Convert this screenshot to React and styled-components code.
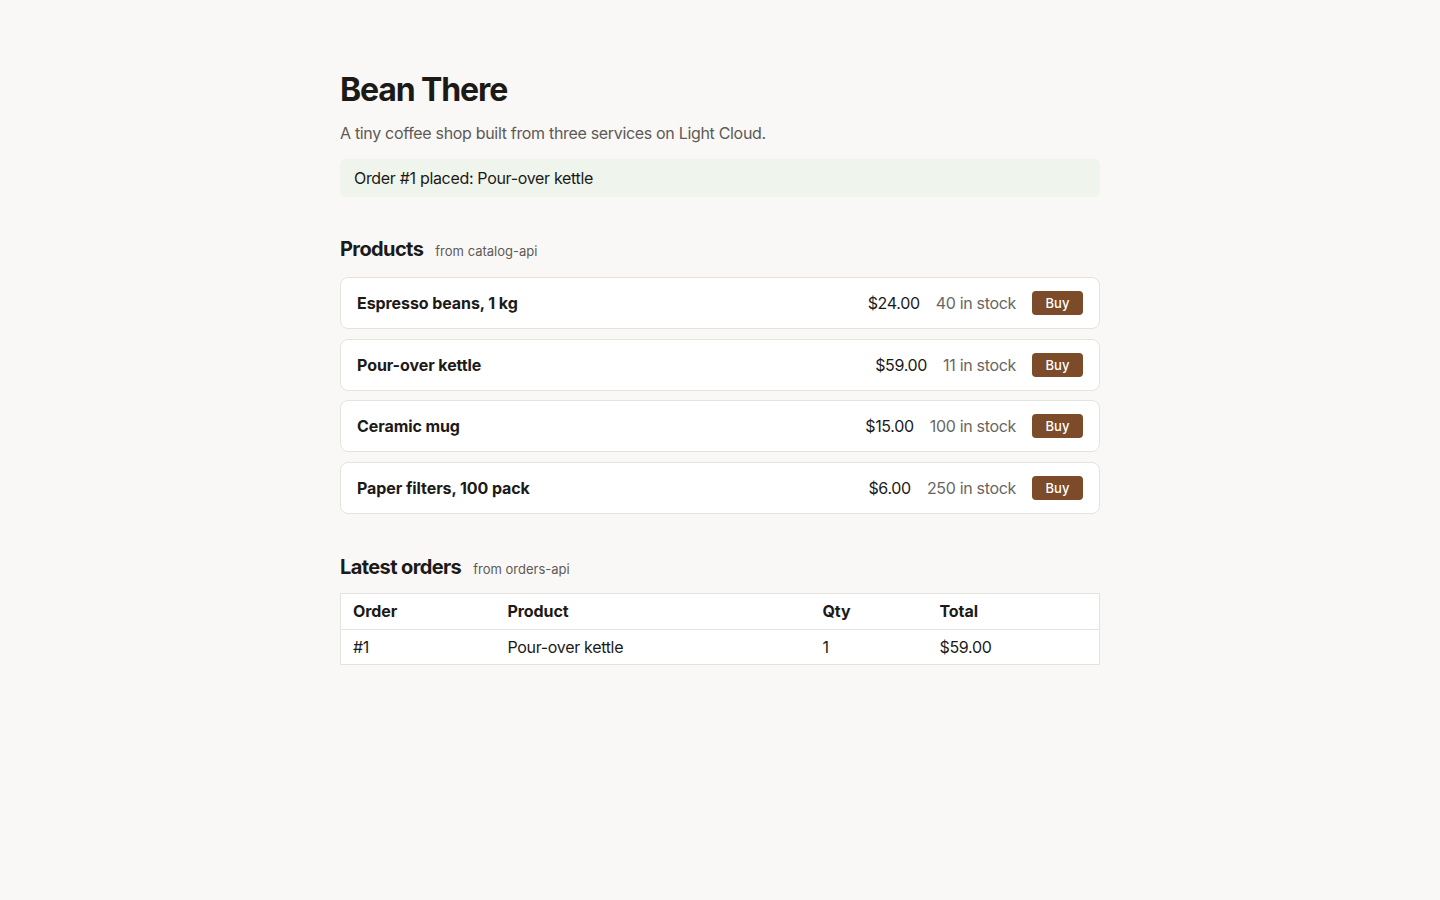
import React from "react";
import styled, { createGlobalStyle } from "styled-components";

const products = [
  { id: 1, name: "Espresso beans, 1 kg", price: "$24.00", stock: 40 },
  { id: 2, name: "Pour-over kettle", price: "$59.00", stock: 11 },
  { id: 3, name: "Ceramic mug", price: "$15.00", stock: 100 },
  { id: 4, name: "Paper filters, 100 pack", price: "$6.00", stock: 250 },
];

const orders = [{ id: 1, product: "Pour-over kettle", qty: 1, total: "$59.00" }];

const App = () => {
  return (
    <>
      <GlobalStyle />
      <Page>
        <Title>Bean There</Title>
        <Subtitle>A tiny coffee shop built from three services on Light Cloud.</Subtitle>
        <Notice>Order #1 placed: Pour-over kettle</Notice>

        <SectionHead first>
          <h2>Products</h2>
          <Source>from catalog-api</Source>
        </SectionHead>
        <ProductList>
          {products.map((p) => (
            <ProductCard key={p.id}>
              <ProductName>{p.name}</ProductName>
              <Meta>
                <Price>{p.price}</Price>
                <Stock>{p.stock} in stock</Stock>
                <BuyBtn>Buy</BuyBtn>
              </Meta>
            </ProductCard>
          ))}
        </ProductList>

        <SectionHead>
          <h2>Latest orders</h2>
          <Source>from orders-api</Source>
        </SectionHead>
        <Table>
          <colgroup>
            <col style={{ width: 155 }} />
            <col style={{ width: 315 }} />
            <col style={{ width: 117 }} />
            <col />
          </colgroup>
          <thead>
            <tr>
              <Th>Order</Th>
              <Th>Product</Th>
              <Th>Qty</Th>
              <Th>Total</Th>
            </tr>
          </thead>
          <tbody>
            {orders.map((o) => (
              <tr key={o.id}>
                <Td>#{o.id}</Td>
                <Td>{o.product}</Td>
                <Td>{o.qty}</Td>
                <Td>{o.total}</Td>
              </tr>
            ))}
          </tbody>
        </Table>
      </Page>
    </>
  );
};

const GlobalStyle = createGlobalStyle`
  * { box-sizing: border-box; }
  html, body {
    margin: 0;
    background: #f9f8f6;
    color: #1c1a17;
    font-family: Inter, "Noto Sans", "Liberation Sans", sans-serif;
    letter-spacing: -0.02em;
  }
`;

const Page = styled.div`
  width: 760px;
  margin: 0 auto;
  padding-top: 71px;
  padding-bottom: 60px;
`;
const Title = styled.h1`
  margin: 0;
  font-size: 32px;
  line-height: 38px;
  font-weight: 700;
  letter-spacing: -0.035em;
`;
const Subtitle = styled.p`
  margin: 12px 0 0;
  font-size: 16px;
  line-height: 24px;
  color: #5e5a55;
`;
const Notice = styled.div`
  margin-top: 14px;
  padding: 10px 14px;
  font-size: 16px;
  line-height: 18px;
  background: #eff5ec;
  border-radius: 6px;
`;
const SectionHead = styled.div`
  display: flex;
  align-items: baseline;
  gap: 12px;
  margin-top: ${({ first }) => (first ? "40px" : "41px")};
  margin-bottom: ${({ first }) => (first ? "16px" : "14px")};
  h2 {
    margin: 0;
    font-size: 20px;
    line-height: 24px;
    font-weight: 700;
    letter-spacing: -0.03em;
  }
`;
const Source = styled.span`
  font-size: 13px;
  color: #5e5a55;
  letter-spacing: 0;
`;
const ProductList = styled.div`
  display: flex;
  flex-direction: column;
  gap: 9.5px;
`;
const ProductCard = styled.div`
  display: flex;
  align-items: center;
  justify-content: space-between;
  height: 52px;
  padding: 0 16px;
  background: #fff;
  border: 1px solid #e6e3df;
  border-radius: 8px;
`;
const ProductName = styled.div`
  font-size: 16px;
  font-weight: 700;
  letter-spacing: -0.005em;
`;
const Meta = styled.div`
  display: flex;
  align-items: center;
  gap: 16px;
  font-size: 16px;
`;
const Price = styled.span`
  color: #1c1a17;
`;
const Stock = styled.span`
  color: #6b6661;
`;
const BuyBtn = styled.button`
  width: 51px;
  height: 24px;
  padding: 0;
  border: none;
  border-radius: 4px;
  background: #7b4b2a;
  color: #fff;
  font-family: inherit;
  font-size: 13px;
  font-weight: 500;
  letter-spacing: 0;
  cursor: pointer;
`;
const Table = styled.table`
  width: 100%;
  border-collapse: collapse;
  background: #fff;
  border: 1px solid #e6e3df;
  font-size: 16px;
`;
const Th = styled.th`
  text-align: left;
  font-weight: 700;
  padding: 0 12px;
  height: 36px;
  letter-spacing: -0.005em;
  border-bottom: 1px solid #e6e3df;
`;
const Td = styled.td`
  padding: 0 12px;
  height: 35px;
`;

export default App;
